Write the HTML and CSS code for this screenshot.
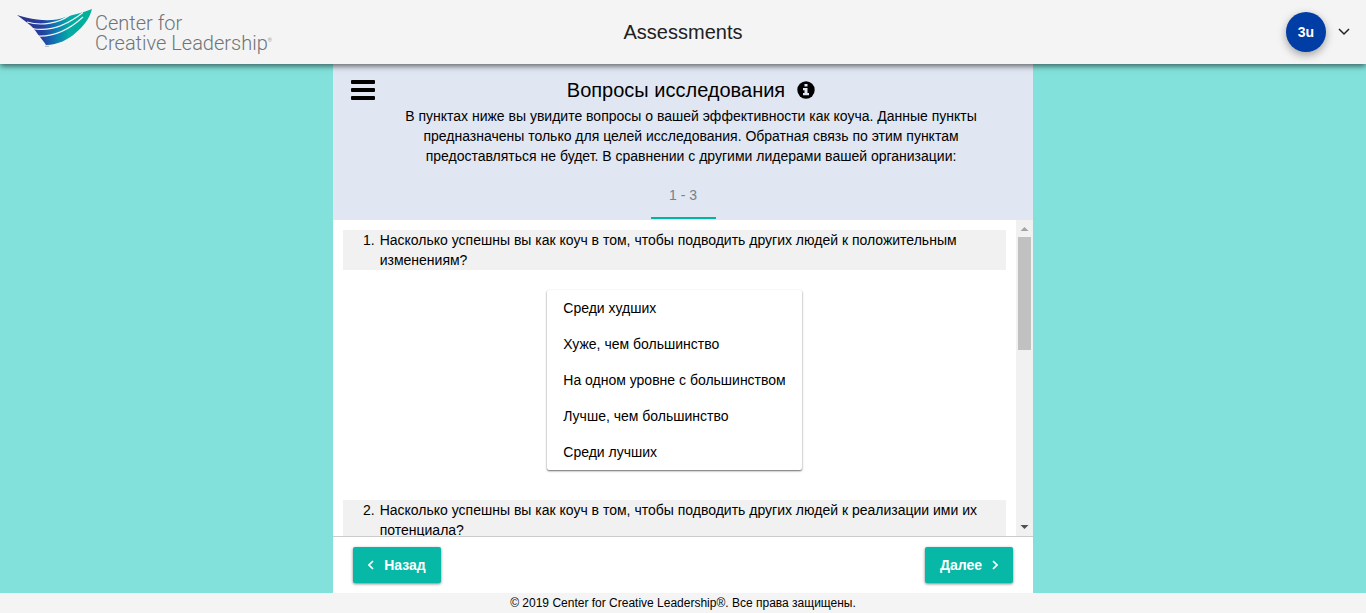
FILE: index.html
```html
<!DOCTYPE html>
<html lang="ru">
<head>
<meta charset="utf-8">
<meta name="viewport" content="width=device-width, initial-scale=1">
<title>Assessments</title>
<link rel="stylesheet" href="styles.css">
</head>
<body>
<header class="topbar">
  <a class="brand" href="#" aria-label="Center for Creative Leadership">
    <svg class="brand-mark" viewBox="0 0 76 38" width="76" height="38" aria-hidden="true">
      <defs>
        <linearGradient id="wing" x1="10" y1="0" x2="76" y2="0" gradientUnits="userSpaceOnUse">
          <stop offset="0" stop-color="#2b3490"/>
          <stop offset=".25" stop-color="#2340a0"/>
          <stop offset=".45" stop-color="#0f78b4"/>
          <stop offset=".65" stop-color="#04aaa4"/>
          <stop offset="1" stop-color="#00b398"/>
        </linearGradient>
      </defs>
      <path fill="url(#wing)" d="M1 6C8 8 14 9.500 21 10.500C32 12 42 11 49 8.300C58 5 67 4 76 0C74 9 67 18 60 23.500C52 31 42 35.500 30 36C28 33 25 29 22 25.500C19 21 16 17 12 14.500C9 12 5 9 1 6Z"/>
      <path fill="none" stroke="#f4f4f4" stroke-width="1.100" d="M11 13C24 17 42 15 54 6M16 19.500C34 23 50 17 67 3.500M21 27C38 28 54 20 67 8"/>
      <path fill="none" stroke="#999" stroke-width=".7" d="M29 37.300h4"/>
    </svg>
    <span class="brand-name"><span>Center for</span><span>Creative Leadership<sup>®</sup></span></span>
  </a>
  <h1 class="topbar-title">Assessments</h1>
  <div class="account">
    <span class="avatar">3u</span>
    <button class="icon-button" type="button" aria-label="Меню пользователя">
      <svg width="12" height="8" viewBox="0 0 12 8"><path d="M1 1L6 6L11 1" fill="none" stroke="#222" stroke-width="1.500"/></svg>
    </button>
  </div>
</header>

<main class="survey">
  <section class="intro">
    <div class="intro-head">
      <button class="icon-button menu-button" type="button" aria-label="Меню">
        <svg width="24" height="20" viewBox="0 0 24 20"><rect width="24" height="4" rx="1"/><rect y="8" width="24" height="4" rx="1"/><rect y="16" width="24" height="4" rx="1"/></svg>
      </button>
      <div class="intro-text">
        <h2 class="intro-title">Вопросы исследования
          <button class="icon-button" type="button" aria-label="Информация">
            <svg width="18" height="18" viewBox="0 0 18 18"><circle cx="9" cy="9" r="8.700"/><path fill="#e0e7f3" d="M7.500 3h3v2.600h-3zM6 7h4.500v5H12v2.200H6V12h1.500V9.200H6z"/></svg>
          </button>
        </h2>
        <p>В пунктах ниже вы увидите вопросы о вашей эффективности как коуча. Данные пункты предназначены только для целей исследования. Обратная связь по этим пунктам предоставляться не будет. В сравнении с другими лидерами вашей организации:</p>
      </div>
    </div>
    <nav class="tabs"><button class="tab" type="button">1 - 3</button></nav>
  </section>

  <div class="questions">
    <ol class="question-list" tabindex="0">
      <li class="question">
        <p class="question-text"><span>1.</span><span>Насколько успешны вы как коуч в том, чтобы подводить других людей к положительным изменениям?</span></p>
        <div class="options">
          <button type="button">Среди худших</button>
          <button type="button">Хуже, чем большинство</button>
          <button type="button">На одном уровне с большинством</button>
          <button type="button">Лучше, чем большинство</button>
          <button type="button">Среди лучших</button>
        </div>
      </li>
      <li class="question">
        <p class="question-text"><span>2.</span><span>Насколько успешны вы как коуч в том, чтобы подводить других людей к реализации ими их потенциала?</span></p>
      </li>
    </ol>
    <div class="scrollbar" aria-hidden="true">
      <svg class="scroll-arrow" width="17" height="17" viewBox="0 0 17 17"><path d="M4.500 11L8.500 7L12.500 11z" fill="#a3a3a3"/></svg>
      <div class="scroll-track"><div class="scroll-thumb"></div></div>
      <svg class="scroll-arrow" width="17" height="17" viewBox="0 0 17 17"><path d="M4.500 6L8.500 10L12.500 6z" fill="#505050"/></svg>
    </div>
  </div>

  <div class="actions">
    <button class="action" type="button"><svg width="6" height="10" viewBox="0 0 6 10"><path d="M5 1L1 5L5 9"/></svg>Назад</button>
    <button class="action" type="button">Далее<svg width="6" height="10" viewBox="0 0 6 10"><path d="M1 1L5 5L1 9"/></svg></button>
  </div>
</main>

<footer class="footer">© 2019 Center for Creative Leadership®. Все права защищены.</footer>
</body>
</html>
```

FILE: styles.css
```css
* {
  box-sizing: border-box;
}

body {
  margin: 0;
  height: 100vh;
  display: flex;
  flex-direction: column;
  background: #82e2db;
  color: #000;
  font: 14px/20px "Liberation Sans", Arial, sans-serif;
}

button {
  font: inherit;
  color: inherit;
  border: 0;
  background: none;
  cursor: pointer;
}

h1, h2, p, ol {
  margin: 0;
  padding: 0;
  font-weight: 400;
}

.icon-button {
  padding: 0;
  display: inline-flex;
}

.topbar {
  position: relative;
  z-index: 1;
  flex: none;
  min-height: 64px;
  display: grid;
  grid-template-columns: 1fr auto 1fr;
  align-items: center;
  padding: 0 16px;
  background: #f4f4f4;
  box-shadow: 0 2px 6px rgba(0, 0, 0, .6);
}

.topbar-title {
  font-size: 20px;
  color: #212121;
}

.brand {
  display: flex;
  align-items: center;
  gap: 3px;
  color: #6f7477;
  text-decoration: none;
}

.brand-mark {
  margin-bottom: 8px;
}

.brand-name {
  display: flex;
  flex-direction: column;
  padding-top: 2px;
  font: 300 20px/20px Roboto, "Open Sans", sans-serif;
  white-space: nowrap;
}

.brand-name sup {
  font-size: 5px;
  line-height: 5px;
}

.account {
  display: flex;
  justify-content: flex-end;
  align-items: center;
  gap: 12px;
}

.avatar {
  width: 40px;
  height: 40px;
  border-radius: 50%;
  display: grid;
  place-items: center;
  background: #003da5;
  color: #fff;
  font-weight: 700;
  box-shadow: 0 3px 8px rgba(0, 0, 0, .35);
}

.survey {
  flex: 1;
  min-height: 0;
  width: 100%;
  max-width: 700px;
  margin: 0 auto;
  display: flex;
  flex-direction: column;
  background: #fff;
}

.intro {
  flex: none;
  padding-bottom: 1px;
  background: #e0e7f3;
}

.intro-head {
  display: grid;
  grid-template-columns: 40px 1fr 24px;
  padding: 12px 18px 5px;
  align-items: start;
}

.menu-button {
  margin-top: 4px;
}

.intro-text {
  text-align: center;
}

.intro-title {
  display: flex;
  justify-content: center;
  align-items: center;
  gap: 12px;
  font-size: 20px;
  line-height: 28px;
  margin-bottom: 2px;
}

.tabs {
  display: flex;
  justify-content: center;
}

.tab {
  height: 48px;
  min-width: 65px;
  padding: 2px 18px 0;
  color: #7b7f86;
  border-bottom: 2px solid #00b5a3;
}

.questions {
  flex: 1;
  min-height: 0;
  display: flex;
}

.question-list {
  flex: 1;
  min-width: 0;
  overflow-y: auto;
  scrollbar-width: none;
  list-style: none;
  padding: 10px 10px 0;
}

.scrollbar {
  flex: none;
  display: flex;
  flex-direction: column;
  width: 17px;
  background: #f1f1f1;
}

.scroll-arrow {
  flex: none;
}

.scroll-track {
  flex: 1;
  padding: 0 2px;
}

.scroll-thumb {
  height: 40%;
  background: #c1c1c1;
}

.question-text {
  display: flex;
  gap: 5px;
  padding-left: 20px;
  background: #f1f1f1;
}

.options {
  display: flex;
  flex-direction: column;
  width: fit-content;
  margin: 20px auto 30px;
  border-radius: 2px;
  box-shadow: 0 1px 2px rgba(0, 0, 0, .6);
}

.options button {
  height: 36px;
  padding: 0 16px;
  text-align: left;
}

.actions {
  flex: none;
  display: flex;
  justify-content: space-between;
  padding: 10px 20px;
  border-top: 1px solid #ccc;
}

.action {
  display: flex;
  align-items: center;
  justify-content: center;
  gap: 10px;
  width: 88px;
  height: 36px;
  padding: 0;
  border-radius: 2px;
  background: #07b8a6;
  color: #fff;
  font-weight: 700;
  box-shadow: 0 1px 3px rgba(0, 0, 0, .5);
}

.action path {
  fill: none;
  stroke: #fff;
  stroke-width: 1.7;
}

.footer {
  flex: none;
  background: #f4f4f4;
  font-size: 12px;
  text-align: center;
}
```
